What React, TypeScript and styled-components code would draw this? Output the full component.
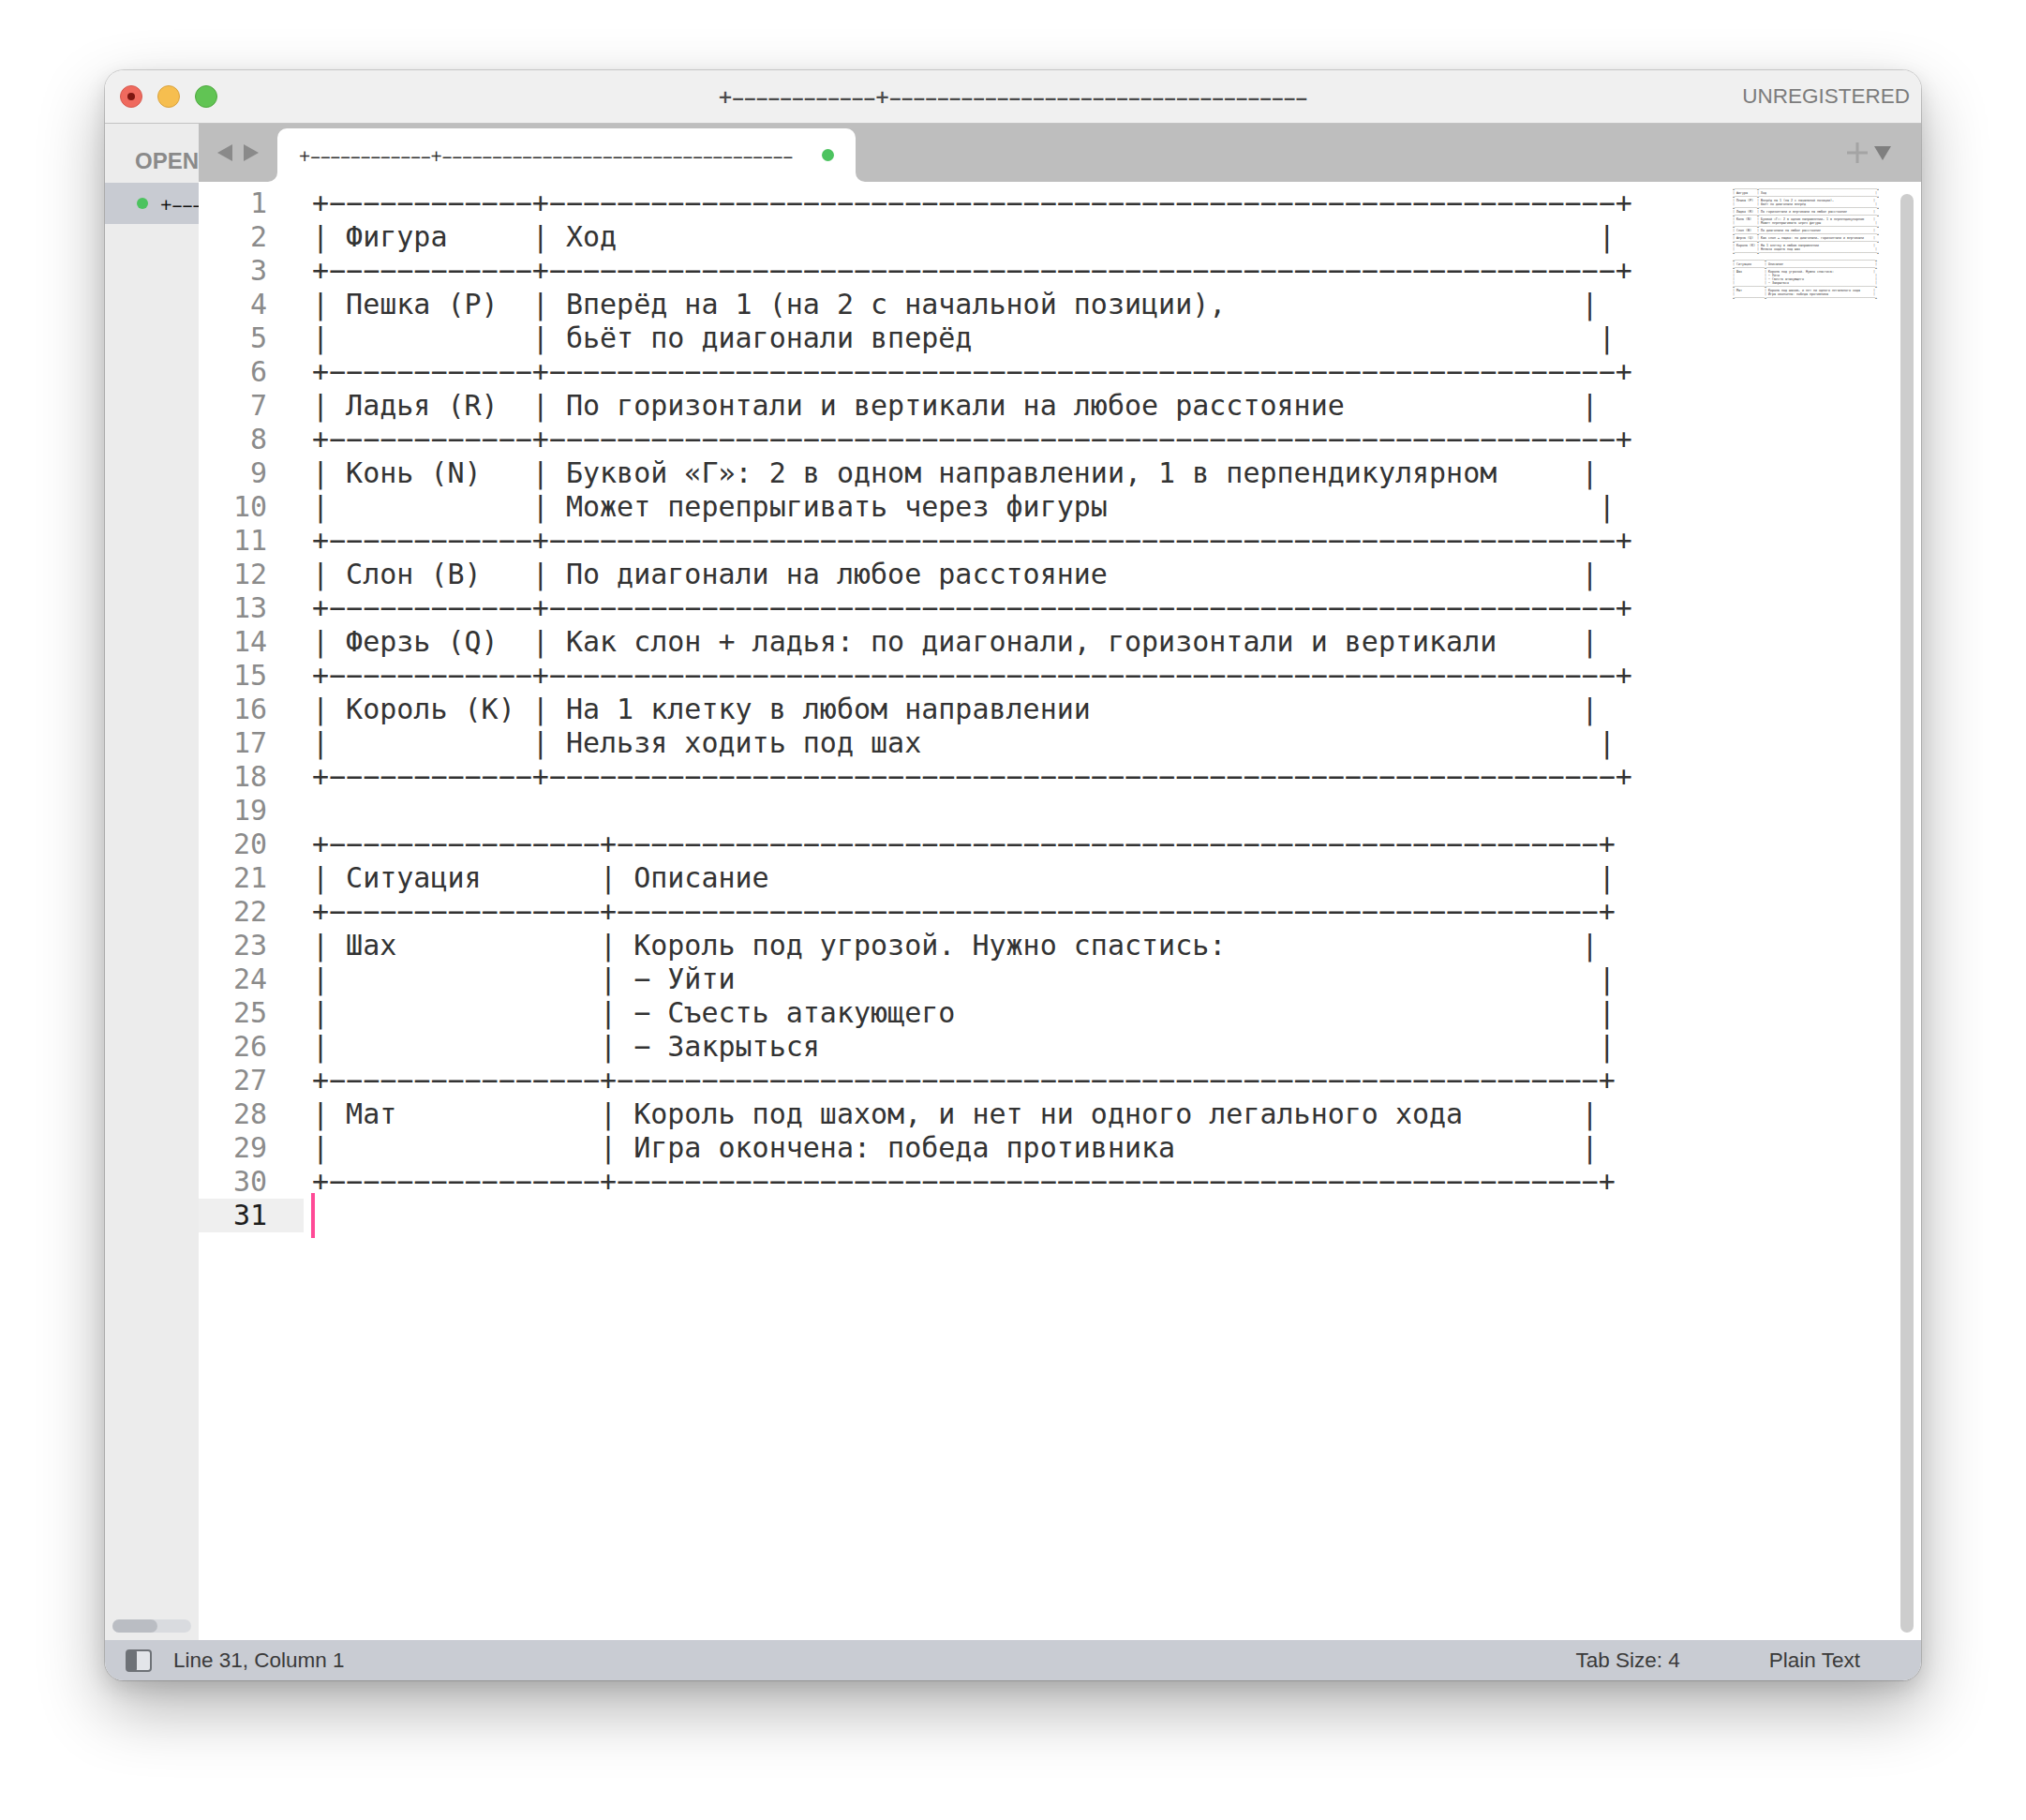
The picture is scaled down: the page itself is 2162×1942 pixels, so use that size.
import React from "react";
import styled, { createGlobalStyle } from "styled-components";

const MONO = `"DejaVu Sans Mono", "Liberation Mono", monospace`;
const SANS = `"Liberation Sans", Arial, sans-serif`;
const TITLE_FONT = `"Open Sans", "Noto Sans", "Liberation Sans", sans-serif`;

const GlobalStyle = createGlobalStyle`
  html, body { margin: 0; padding: 0; background: #ffffff; }
  body { font-family: ${SANS}; }
`;

const D = "\u2212";
const ND = "\u2013";
const B1 = "+" + D.repeat(12) + "+" + D.repeat(63) + "+";
const B2 = "+" + D.repeat(16) + "+" + D.repeat(58) + "+";

function row(c1: string, c2: string, sep: number, bar: number): string {
  let s = ("| " + c1).padEnd(sep, " ") + "| " + c2;
  s = s.padEnd(bar, " ") + "|";
  return s;
}

const LINES: string[] = [
  B1,
  row("Фигура", "Ход", 13, 76),
  B1,
  row("Пешка (P)", "Вперёд на 1 (на 2 с начальной позиции),", 13, 75),
  row("", "бьёт по диагонали вперёд", 13, 76),
  B1,
  row("Ладья (R)", "По горизонтали и вертикали на любое расстояние", 13, 75),
  B1,
  row("Конь (N)", "Буквой «Г»: 2 в одном направлении, 1 в перпендикулярном", 13, 75),
  row("", "Может перепрыгивать через фигуры", 13, 76),
  B1,
  row("Слон (B)", "По диагонали на любое расстояние", 13, 75),
  B1,
  row("Ферзь (Q)", "Как слон + ладья: по диагонали, горизонтали и вертикали", 13, 75),
  B1,
  row("Король (K)", "На 1 клетку в любом направлении", 13, 75),
  row("", "Нельзя ходить под шах", 13, 76),
  B1,
  "",
  B2,
  row("Ситуация", "Описание", 17, 76),
  B2,
  row("Шах", "Король под угрозой. Нужно спастись:", 17, 75),
  row("", D + " Уйти", 17, 76),
  row("", D + " Съесть атакующего", 17, 76),
  row("", D + " Закрыться", 17, 76),
  B2,
  row("Мат", "Король под шахом, и нет ни одного легального хода", 17, 75),
  row("", "Игра окончена: победа противника", 17, 75),
  B2,
  "",
];

const TITLE = "+" + ND.repeat(12) + "+" + ND.repeat(35);

const Page = styled.div`
  width: 2162px;
  height: 1942px;
  box-sizing: border-box;
  padding: 75px 0 0 112px;
`;

const Window = styled.div`
  width: 1938px;
  height: 1718px;
  border-radius: 20px;
  overflow: hidden;
  display: flex;
  flex-direction: column;
  background: #ffffff;
  box-shadow: 0 0 0 1px rgba(0, 0, 0, 0.16), 0 30px 70px rgba(0, 0, 0, 0.3),
    0 8px 22px rgba(0, 0, 0, 0.12);
`;

const TitleBar = styled.div`
  height: 57px;
  flex: none;
  box-sizing: border-box;
  background: #f0f0f0;
  border-bottom: 1px solid #c3c3c3;
  display: grid;
  grid-template-columns: 1fr auto 1fr;
  align-items: center;
`;

const Lights = styled.div`
  display: flex;
  align-items: center;
  gap: 16px;
  padding-left: 16px;
`;

const Light = styled.div<{ $fill: string; $edge: string }>`
  width: 24px;
  height: 24px;
  box-sizing: border-box;
  border-radius: 50%;
  background: ${(p) => p.$fill};
  border: 1px solid ${(p) => p.$edge};
  display: flex;
  align-items: center;
  justify-content: center;
`;

const CloseDot = styled.div`
  width: 8px;
  height: 8px;
  border-radius: 50%;
  background: #7e1610;
`;

const TitleText = styled.div`
  font-family: ${TITLE_FONT};
  font-size: 25.5px;
  font-weight: 600;
  color: #4a4a4a;
  white-space: pre;
`;

const Unregistered = styled.div`
  justify-self: end;
  padding-right: 12px;
  font-family: ${SANS};
  font-size: 22.5px;
  color: #7c7c7c;
`;

const Body = styled.div`
  flex: 1;
  min-height: 0;
  display: flex;
`;

const Sidebar = styled.div`
  width: 100px;
  flex: none;
  background: #ececec;
  display: flex;
  flex-direction: column;
  overflow: hidden;
`;

const SidebarHeader = styled.div`
  height: 63px;
  flex: none;
  box-sizing: border-box;
  padding: 26px 0 0 32px;
  font-family: ${SANS};
  font-weight: 700;
  font-size: 24px;
  color: #8a8a8a;
  white-space: nowrap;
`;

const OpenRow = styled.div`
  height: 44px;
  flex: none;
  background: #c8cbd2;
  display: flex;
  align-items: center;
  gap: 13px;
  padding-left: 34px;
  font-family: ${TITLE_FONT};
  font-size: 22px;
  color: #111;
  white-space: nowrap;
`;

const GreenDot = styled.div<{ $size: number }>`
  width: ${(p) => p.$size}px;
  height: ${(p) => p.$size}px;
  flex: none;
  border-radius: 50%;
  background: #4cc35f;
`;

const SidebarFill = styled.div`
  flex: 1;
`;

const HScroll = styled.div`
  height: 14px;
  flex: none;
  margin: 0 8px 8px 8px;
  border-radius: 7px;
  background: #d9dbdf;
  display: flex;
`;

const HThumb = styled.div`
  width: 48px;
  border-radius: 7px;
  background: #babdc3;
`;

const EditorPane = styled.div`
  flex: 1;
  min-width: 0;
  display: flex;
  flex-direction: column;
`;

const TabBar = styled.div`
  height: 62px;
  flex: none;
  display: flex;
  background: #ffffff;
`;

const NavArea = styled.div`
  width: 84px;
  flex: none;
  box-sizing: border-box;
  background: #bebebe;
  border-bottom-right-radius: 10px;
  display: flex;
  align-items: center;
  gap: 12px;
  padding-left: 20px;
`;

const TabSlot = styled.div`
  width: 617px;
  flex: none;
  background: #bebebe;
  padding-top: 5px;
  box-sizing: border-box;
`;

const Tab = styled.div`
  height: 57px;
  background: #ffffff;
  border-radius: 10px 10px 0 0;
  display: flex;
  align-items: center;
  padding: 0 23px;
  font-family: ${TITLE_FONT};
  font-size: 21.4px;
  color: #333;
`;

const TabLabel = styled.div`
  flex: 1;
  white-space: pre;
  overflow: hidden;
`;

const TabRest = styled.div`
  flex: 1;
  background: #bebebe;
  border-bottom-left-radius: 10px;
  display: flex;
  justify-content: flex-end;
  align-items: center;
  gap: 7px;
  padding-right: 32px;
`;

const EditorBody = styled.div`
  flex: 1;
  min-height: 0;
  display: flex;
  background: #ffffff;
`;

const Gutter = styled.div`
  width: 112px;
  flex: none;
  padding-top: 5px;
`;

const GutterNum = styled.div<{ $active?: boolean }>`
  height: 36px;
  line-height: 36px;
  text-align: right;
  padding-right: 39px;
  font-family: ${MONO};
  font-size: 30px;
  color: ${(p) => (p.$active ? "#1d1d1d" : "#8b8b8b")};
  background: ${(p) => (p.$active ? "#efefef" : "transparent")};
`;

const Code = styled.div`
  flex: 1;
  min-width: 0;
  padding: 5px 0 0 9px;
  overflow: hidden;
`;

const CodeLine = styled.div`
  height: 36px;
  line-height: 36px;
  white-space: pre;
  font-family: ${MONO};
  font-size: 30px;
  color: #333333;
`;

const Caret = styled.div`
  width: 4px;
  height: 48px;
  margin: -6px 0 0 -1px;
  background: #ff4a96;
`;

const Minimap = styled.div`
  width: 179px;
  flex: none;
  padding-top: 6px;
  box-sizing: border-box;
  overflow: hidden;
`;

const MiniViewport = styled.div`
  width: 162px;
  height: 124px;
  overflow: hidden;
`;

const MiniContent = styled.div`
  width: 1440px;
  transform: scale(0.1107);
  transform-origin: 0 0;
`;

const ScrollCol = styled.div`
  width: 22px;
  flex: none;
  box-sizing: border-box;
  padding: 13px 8px 8px 0;
  display: flex;
`;

const ScrollThumb = styled.div`
  flex: 1;
  border-radius: 7px;
  background: #cdcdcd;
`;

const StatusBar = styled.div`
  height: 43px;
  flex: none;
  box-sizing: border-box;
  background: #c9ccd3;
  display: flex;
  align-items: center;
  padding: 0 65px 0 22px;
  font-family: ${SANS};
  font-size: 22.5px;
  color: #3a3a3a;
`;

const StatusLeft = styled.div`
  flex: 1;
  display: flex;
  align-items: center;
  gap: 23px;
`;

const StatusRight = styled.div`
  display: flex;
  align-items: center;
  gap: 95px;
`;

const Arrow = ({ dir }: { dir: "left" | "right" }) => (
  <svg width="16" height="18" viewBox="0 0 16 18">
    <polygon
      points={dir === "left" ? "16,0 16,18 0,9" : "0,0 0,18 16,9"}
      fill="#8a8a8a"
    />
  </svg>
);

const PlusIcon = () => (
  <svg width="22" height="22" viewBox="0 0 22 22">
    <rect x="9.5" y="0" width="3" height="22" fill="#a4a4a4" />
    <rect x="0" y="9.5" width="22" height="3" fill="#a4a4a4" />
  </svg>
);

const DownIcon = () => (
  <svg width="18" height="15" viewBox="0 0 18 15">
    <polygon points="0,0 18,0 9,15" fill="#7f7f7f" />
  </svg>
);

const PanelIcon = () => (
  <svg width="28" height="24" viewBox="0 0 28 24">
    <rect x="1" y="1" width="26" height="22" rx="3" fill="#e3e5e9" stroke="#6e7277" strokeWidth="2" />
    <rect x="1" y="1" width="11" height="22" rx="2" fill="#6e7277" />
  </svg>
);

const CodeLines = ({ caret }: { caret: boolean }) => (
  <>
    {LINES.map((l, i) => (
      <CodeLine key={i}>{caret && i === LINES.length - 1 ? <Caret /> : l}</CodeLine>
    ))}
  </>
);

export default function App() {
  return (
    <Page>
      <GlobalStyle />
      <Window>
        <TitleBar>
          <Lights>
            <Light $fill="#ef6a5e" $edge="#d65a4f">
              <CloseDot />
            </Light>
            <Light $fill="#f6be4f" $edge="#d9a23e" />
            <Light $fill="#61c454" $edge="#4fa83f" />
          </Lights>
          <TitleText>{TITLE}</TitleText>
          <Unregistered>UNREGISTERED</Unregistered>
        </TitleBar>
        <Body>
          <Sidebar>
            <SidebarHeader>OPEN FILES</SidebarHeader>
            <OpenRow>
              <GreenDot $size={12} />
              <span>{TITLE}</span>
            </OpenRow>
            <SidebarFill />
            <HScroll>
              <HThumb />
            </HScroll>
          </Sidebar>
          <EditorPane>
            <TabBar>
              <NavArea>
                <Arrow dir="left" />
                <Arrow dir="right" />
              </NavArea>
              <TabSlot>
                <Tab>
                  <TabLabel>{TITLE}</TabLabel>
                  <GreenDot $size={13} />
                </Tab>
              </TabSlot>
              <TabRest>
                <PlusIcon />
                <DownIcon />
              </TabRest>
            </TabBar>
            <EditorBody>
              <Gutter>
                {LINES.map((_, i) => (
                  <GutterNum key={i} $active={i === LINES.length - 1}>
                    {i + 1}
                  </GutterNum>
                ))}
              </Gutter>
              <Code>
                <CodeLines caret />
              </Code>
              <Minimap>
                <MiniViewport>
                  <MiniContent>
                    <CodeLines caret={false} />
                  </MiniContent>
                </MiniViewport>
              </Minimap>
              <ScrollCol>
                <ScrollThumb />
              </ScrollCol>
            </EditorBody>
          </EditorPane>
        </Body>
        <StatusBar>
          <StatusLeft>
            <PanelIcon />
            <span>Line 31, Column 1</span>
          </StatusLeft>
          <StatusRight>
            <span>Tab Size: 4</span>
            <span>Plain Text</span>
          </StatusRight>
        </StatusBar>
      </Window>
    </Page>
  );
}
